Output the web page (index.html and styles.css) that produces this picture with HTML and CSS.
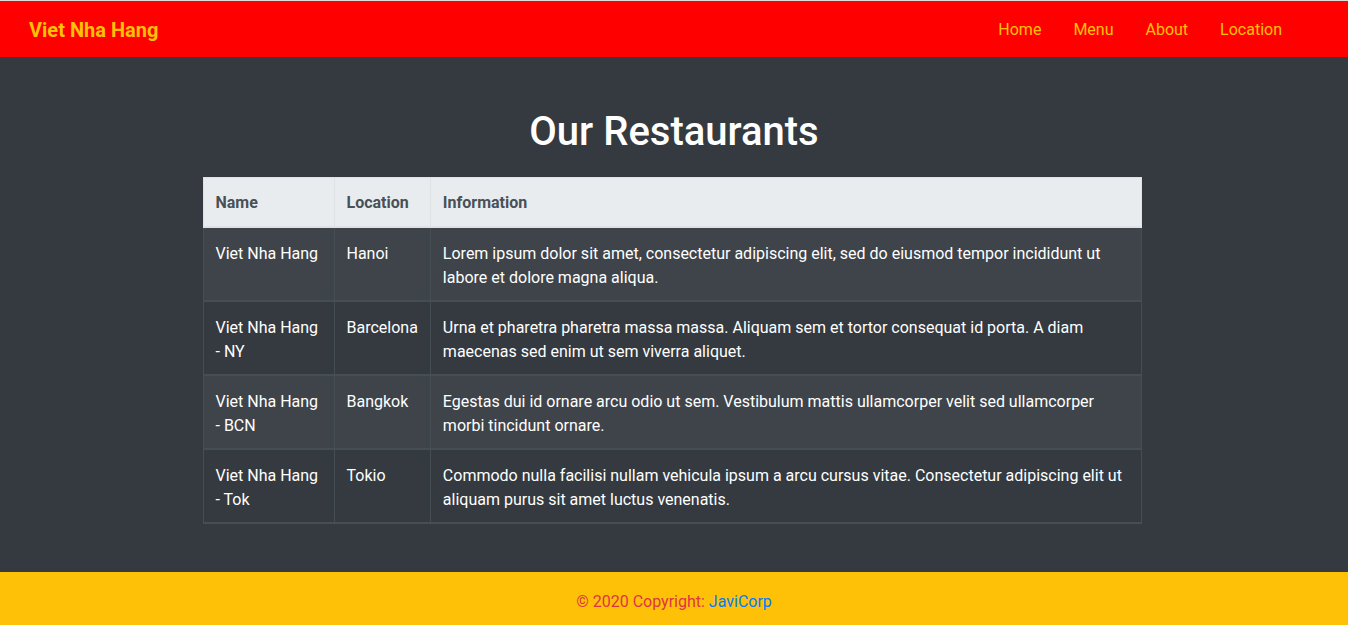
FILE: index.html
```html
<!DOCTYPE html>
<html lang="en">
<head>
<meta charset="utf-8">
<title>Viet Nha Hang - Our Restaurants</title>
<link rel="stylesheet" href="styles.css">
</head>
<body>
<nav class="navbar">
  <a class="brand" href="#">Viet Nha Hang</a>
  <ul class="nav">
    <li><a href="#">Home</a></li>
    <li><a href="#">Menu</a></li>
    <li><a href="#">About</a></li>
    <li><a href="#">Location</a></li>
  </ul>
</nav>
<main class="main">
  <h1 class="title">Our Restaurants</h1>
  <table class="table">
    <colgroup>
      <col class="c-name">
      <col class="c-loc">
      <col>
    </colgroup>
    <thead>
      <tr><th>Name</th><th>Location</th><th>Information</th></tr>
    </thead>
    <tbody>
      <tr class="odd"><td>Viet Nha Hang</td><td>Hanoi</td><td>Lorem ipsum dolor sit amet, consectetur adipiscing elit, sed do eiusmod tempor incididunt ut labore et dolore magna aliqua.</td></tr>
      <tr><td>Viet Nha Hang - NY</td><td>Barcelona</td><td>Urna et pharetra pharetra massa massa. Aliquam sem et tortor consequat id porta. A diam maecenas sed enim ut sem viverra aliquet.</td></tr>
      <tr class="odd"><td>Viet Nha Hang - BCN</td><td>Bangkok</td><td>Egestas dui id ornare arcu odio ut sem. Vestibulum mattis ullamcorper velit sed ullamcorper morbi tincidunt ornare.</td></tr>
      <tr><td>Viet Nha Hang - Tok</td><td>Tokio</td><td>Commodo nulla facilisi nullam vehicula ipsum a arcu cursus vitae. Consectetur adipiscing elit ut aliquam purus sit amet luctus venenatis.</td></tr>
    </tbody>
  </table>
</main>
<footer class="footer">
  © 2020 Copyright: <a href="#">JaviCorp</a>
</footer>
</body>
</html>
```
FILE: styles.css
```css
* { box-sizing: border-box; }
html, body { margin: 0; padding: 0; }
body {
  font-family: Roboto, "Liberation Sans", sans-serif;
  font-size: 16px;
  line-height: 1.5;
  color: #212529;
  background: #343a40;
  border-top: 1px solid #dcdcdc;
}
a { text-decoration: none; }
.navbar {
  display: flex;
  align-items: center;
  justify-content: space-between;
  height: 56px;
  background: #ff0000;
  padding: 2px 50px 0 29px;
}
.brand {
  font-size: 20px;
  font-weight: 700;
  color: #ffc107;
}
.nav {
  display: flex;
  list-style: none;
  margin: 0;
  padding: 0;
}
.nav a {
  display: block;
  padding: 0 16px;
  color: #ffc107;
}
.main {
  padding: 51px 0 48px;
}
.title {
  margin: 0 0 21px;
  text-align: center;
  color: #fff;
  font-size: 40px;
  font-weight: 500;
  line-height: 48px;
}
.table {
  width: 939px;
  margin: 0 auto;
  border-collapse: collapse;
  color: #fff;
  position: relative;
  left: -2px;
}
.c-name { width: 131px; }
.c-loc { width: 96px; }
.table th, .table td {
  padding: 14px 12px 10px;
  text-align: left;
  vertical-align: top;
  border: 1px solid #454d55;
}
.table td { border-width: 2px 1px 1px; }
.table tbody tr:last-child td { border-bottom-width: 2px; }
.table th {
  padding: 13px 12px 11px;
  background: #e9ecef;
  color: #495057;
  font-weight: 700;
  border-color: #dee2e6;
  border-bottom-width: 2px;
}
.table tbody tr { background: #343a40; }
.table tbody tr.odd { background: #3e444a; }
.footer {
  background: #ffc107;
  color: #dc3545;
  text-align: center;
  padding: 18px 0 14px;
}
.footer a { color: #007bff; }
```
